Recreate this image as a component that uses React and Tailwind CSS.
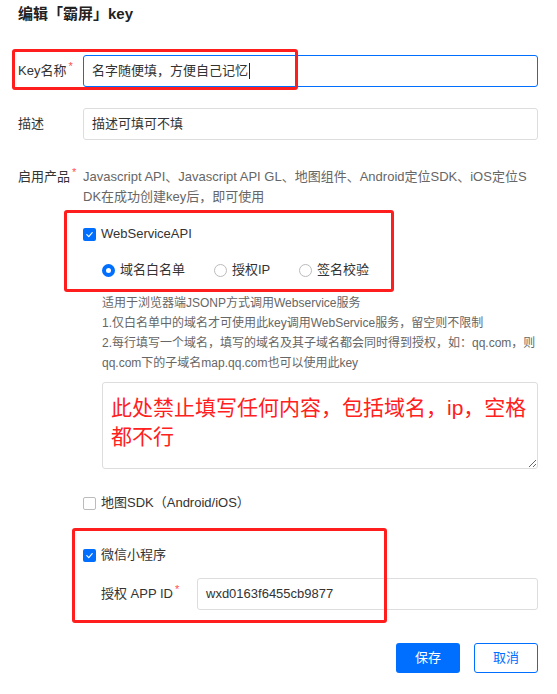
import { useState } from 'react';

const BLUE = 'bg-[#006eff]';

function Check({ checked, label }) {
  return (
    <label className="flex items-center h-5 text-[13px] text-[#333]">
      <span
        className={
          checked
            ? 'w-[13px] h-[13px] rounded-[2px] bg-[#006eff] flex items-center justify-center'
            : 'w-[13px] h-[13px] rounded-[2px] border border-[#bbb] bg-white'
        }
      >
        {checked && (
          <svg width="9" height="9" viewBox="0 0 10 10" fill="none">
            <path d="M2 5.2 4.2 7.3 8 3" stroke="white" strokeWidth="1.3" strokeLinecap="round" strokeLinejoin="round" />
          </svg>
        )}
      </span>
      <span className="ml-[5px]">{label}</span>
    </label>
  );
}

function Radio({ checked, label }) {
  return (
    <label className="flex items-center h-5 text-[13px] text-[#333]">
      <span
        className={
          checked
            ? 'w-[13px] h-[13px] rounded-full border-[4px] border-[#006eff] bg-white'
            : 'w-[13px] h-[13px] rounded-full border border-[#bbb] bg-white'
        }
      />
      <span className="ml-[5px]">{label}</span>
    </label>
  );
}

function Label({ children, req }) {
  return (
    <div className="w-[65px] shrink-0 text-[13px] text-[#333]">
      {children}
      {req && <sup className="text-[#ff4d4f] ml-[2px] text-[11px]">*</sup>}
    </div>
  );
}

export default function App() {
  const [name] = useState('名字随便填，方便自己记忆');

  return (
    <div className="relative w-[557px] h-[694px] bg-white px-[18px] font-['Liberation_Sans','Noto_Sans_CJK_SC',sans-serif]">
      <div className="h-7 flex items-center text-[15px] font-bold text-[#222]">编辑「霸屏」key</div>

      <div className="mt-[27px] flex items-center">
        <Label req>Key名称</Label>
        <div className="w-[455px] h-8 border border-[#006eff] rounded-[3px] flex items-center px-2 text-[13px] text-[#333]">
          {name}
          <span className="w-px h-[16px] bg-[#222] ml-px" />
        </div>
      </div>

      <div className="mt-[21px] flex items-center">
        <Label>描述</Label>
        <div className="w-[455px] h-8 border border-[#ddd] rounded-[3px] flex items-center px-2 text-[13px] text-[#333]">
          描述可填可不填
        </div>
      </div>

      <div className="mt-[27px] flex">
        <div className="leading-5">
          <Label req>启用产品</Label>
        </div>
        <div className="w-[455px]">
          <div className="text-[13px] leading-5 text-[#666] whitespace-nowrap">
            <div>Javascript API、Javascript API GL、地图组件、Android定位SDK、iOS定位S</div>
            <div>DK在成功创建key后，即可使用</div>
          </div>

          <div className="mt-[17px]">
            <Check checked label="WebServiceAPI" />
          </div>

          <div className="pl-[19px]">
            <div className="mt-4 flex items-center">
              <div className="w-[112px]"><Radio checked label="域名白名单" /></div>
              <div className="w-[85px]"><Radio label="授权IP" /></div>
              <Radio label="签名校验" />
            </div>

            <div className="mt-[13px] text-[12px] leading-5 text-[#666] whitespace-nowrap">
              <div>适用于浏览器端JSONP方式调用Webservice服务</div>
              <div>1.仅白名单中的域名才可使用此key调用WebService服务，留空则不限制</div>
              <div>2.每行填写一个域名，填写的域名及其子域名都会同时得到授权，如：qq.com，则</div>
              <div>qq.com下的子域名map.qq.com也可以使用此key</div>
            </div>

            <textarea
              readOnly
              defaultValue={'此处禁止填写任何内容，包括域名，ip，空格\n都不行'}
              className="mt-[9px] block w-[436px] h-[87px] border border-[#ddd] rounded-[3px] px-2 pt-[10px] text-[21px] leading-[29px] text-[#ff2020] outline-none resize-y overflow-hidden font-['Liberation_Sans','Noto_Sans_CJK_SC',sans-serif]"
            />
          </div>

          <div className="mt-6">
            <Check label="地图SDK（Android/iOS）" />
          </div>

          <div className="mt-8">
            <Check checked label="微信小程序" />
          </div>

          <div className="mt-[13px] pl-[18px] flex items-center">
            <div className="w-[96px] text-[13px] text-[#333]">
              授权 APP ID<sup className="text-[#ff4d4f] ml-[2px] text-[11px]">*</sup>
            </div>
            <div className="flex-1 h-8 border border-[#ddd] rounded-[3px] flex items-center px-2 text-[13px] text-[#333]">
              wxd0163f6455cb9877
            </div>
          </div>
        </div>
      </div>

      <div className="mt-[33px] flex justify-end gap-[14px] pr-px">
        <button className={`w-16 h-[30px] rounded-[3px] ${BLUE} text-white text-[13px]`}>保存</button>
        <button className="w-16 h-[30px] rounded-[3px] border border-[#006eff] bg-white text-[#006eff] text-[13px]">取消</button>
      </div>

      {/* annotation boxes */}
      <div className="absolute left-[12px] top-[49px] w-[286px] h-[41px] border-[3px] border-[#ff1e1e] rounded-[3px] pointer-events-none" />
      <div className="absolute left-[64px] top-[210px] w-[330px] h-[82px] border-[3px] border-[#ff1e1e] rounded-[3px] pointer-events-none" />
      <div className="absolute left-[72px] top-[528px] w-[315px] h-[95px] border-[3px] border-[#ff1e1e] rounded-[3px] pointer-events-none" />
    </div>
  );
}
